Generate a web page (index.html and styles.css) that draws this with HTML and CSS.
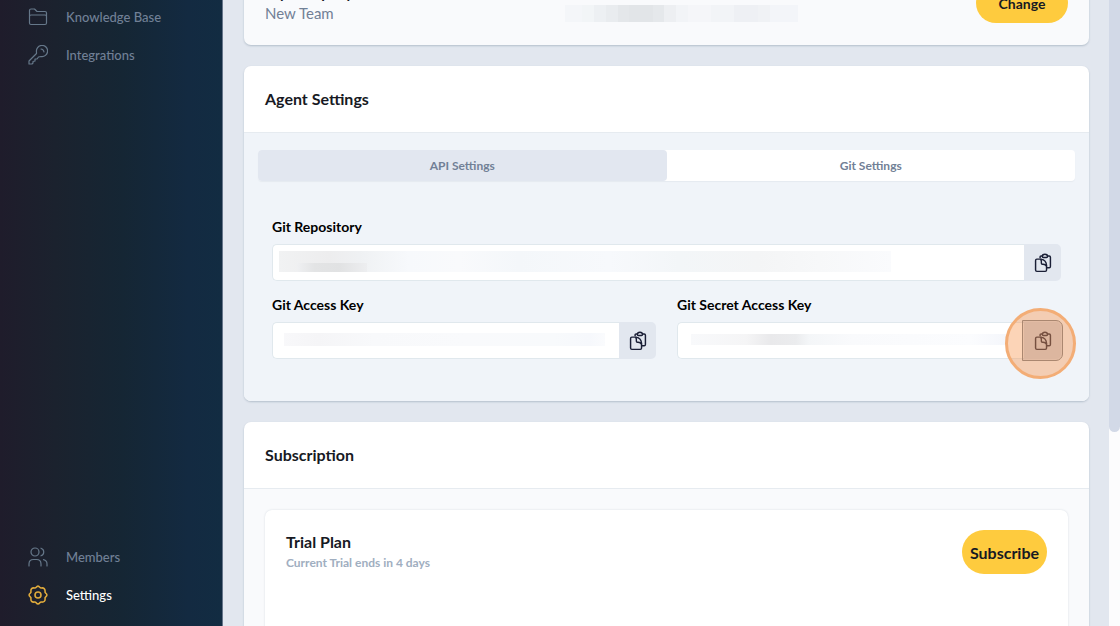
FILE: index.html
```html
<!DOCTYPE html>
<html lang="en">
<head>
<meta charset="utf-8">
<title>Settings</title>
<link rel="stylesheet" href="styles.css">
</head>
<body>
<svg class="sprite" aria-hidden="true">
  <symbol id="copy" viewBox="221 66 54 62">
    <path d="M239 82V78q0-3 3-3h4M262 75h5q4 0 4 4V108q0 4-4 4H260"/>
    <path d="M246 77q0-7 8-7t8 7q0 3-3 3H249q-3 0-3-3z"/>
    <path d="M242 85H229q-4 0-4 4V119q0 4 4 4H255q4 0 4-4V104Q258 88 242 85z"/>
    <path d="M240 85Q244 88 243 98q0 3 3 3 10-1 13 6"/>
  </symbol>
</svg>
<div class="app">
  <aside class="sidebar">
    <nav class="nav">
      <a class="nav-item" href="#"><svg class="nav-icon" viewBox="0 0 20 20"><path d="M1.5 16V3.5q0-1.500 1.500-1.500H6.500l2.500 2.500H17q1.500 0 1.500 1.500V16q0 1.500-1.500 1.500H3q-1.500 0-1.500-1.500zM1.500 9.500q0-1.500 1.500-1.500H17q1.500 0 1.500 1.500"/></svg>Knowledge Base</a>
      <a class="nav-item" href="#"><svg class="nav-icon" viewBox="0 0 20 20"><path d="M8.500 7A5.600 5.600 0 1 1 13 11.500L10.500 12 9 14H7v2L5 16.500V18L4 19H1V16L8.500 8.500zM13 4q2.500 0 3 3"/></svg>Integrations</a>
    </nav>
    <nav class="nav">
      <a class="nav-item" href="#"><svg class="nav-icon" viewBox="0 0 20 20"><circle cx="7" cy="5" r="4"/><path d="M1 19V17q0-4.500 4.500-4.500h3Q13 12.500 13 17v2M13 1.200a4 4 0 0 1 0 7.600M15.500 12.700Q19 13.500 19 17v2"/></svg>Members</a>
      <a class="nav-item active" href="#"><svg class="nav-icon" viewBox="0 0 20 20"><circle cx="10" cy="10" r="3"/><path d="M8.200 2.300Q10-.100 11.800 2.300Q12.600 3.300 13.900 2.900Q16.900 2.700 17.100 6.100Q16.700 7.400 17.700 8.200Q20.100 10 17.700 11.800Q16.700 12.600 17.100 13.900Q17.300 16.900 13.900 17.100Q12.600 16.700 11.800 17.700Q10 20.100 8.200 17.700Q7.400 16.700 6.100 17.100Q2.700 17.300 2.900 13.900Q3.300 12.600 2.300 11.800Q-.100 10 2.300 8.200Q3.300 7.400 2.900 6.100Q2.700 2.700 6.100 2.900Q7.400 3.300 8.200 2.300z"/></svg>Settings</a>
    </nav>
  </aside>
  <main class="main">
    <section class="card team">
      <div>
        <h2 class="team-title">My Company</h2>
        <p class="team-name">New Team</p>
      </div>
      <span class="mask mask-team"></span>
      <button class="btn change" type="button">Change</button>
    </section>

    <section class="card">
      <h2 class="card-head">Agent Settings</h2>
      <div class="agent">
        <div class="tabs" role="tablist">
          <button class="tab selected" type="button" role="tab">API Settings</button>
          <button class="tab" type="button" role="tab">Git Settings</button>
        </div>
        <form class="fields">
          <div class="field wide">
            <label for="repo">Git Repository</label>
            <div class="group"><input id="repo" class="mask-repo" type="text" readonly><button class="copy" type="button" aria-label="Copy"><svg><use href="#copy"/></svg></button></div>
          </div>
          <div class="field">
            <label for="access">Git Access Key</label>
            <div class="group"><input id="access" class="mask-access" type="text" readonly><button class="copy" type="button" aria-label="Copy"><svg><use href="#copy"/></svg></button></div>
          </div>
          <div class="field">
            <label for="secret">Git Secret Access Key</label>
            <div class="group"><input id="secret" class="mask-secret" type="text" readonly><button class="copy spotlight" type="button" aria-label="Copy"><svg><use href="#copy"/></svg></button></div>
          </div>
        </form>
      </div>
    </section>

    <section class="card">
      <h2 class="card-head">Subscription</h2>
      <div class="subscription">
        <div class="plan">
          <div>
            <h3 class="plan-title">Trial Plan</h3>
            <p class="plan-note">Current Trial ends in 4 days</p>
          </div>
          <button class="btn subscribe" type="button">Subscribe</button>
        </div>
      </div>
    </section>
  </main>
  <div class="scroll-track"><div class="scroll-thumb"></div></div>
</div>
</body>
</html>
```
FILE: styles.css
```css
* { box-sizing: border-box; }
body { margin: 0; font-family: Lato, "Liberation Sans", sans-serif; color: #171923; background: #e2e7ef; }
h2, h3, p { margin: 0; }
button, input { font: inherit; margin: 0; }
.sprite { position: absolute; width: 0; height: 0; }

.app { display: flex; height: 100vh; overflow: hidden; }

.sidebar {
  flex: none; width: 223px; padding-bottom: 12px;
  display: flex; flex-direction: column; justify-content: space-between;
  background: linear-gradient(90deg, #1f1c2b 0%, #1b222e 25%, #152634 55%, #132a41 85%, #122c42 100%);
  border-right: 1px solid #66758a;
}
.nav { display: flex; flex-direction: column; }
.nav:first-child { margin-top: -2px; }
.nav-item {
  display: flex; align-items: center; gap: 18px; height: 38px; padding-left: 28px;
  color: #718096; font-size: 13px; font-weight: 500; text-decoration: none;
}
.nav-icon { width: 20px; height: 20px; fill: none; stroke: #66788a; stroke-width: 1.2; stroke-linejoin: round; stroke-linecap: round; }
.active { color: #fff; }
.active .nav-icon { stroke: #dfaa3c; stroke-width: 1.6; }

.main { flex: 1; display: flex; flex-direction: column; gap: 21px; margin-top: -37px; padding: 0 20px 0 21px; }
.card { flex: none; border-radius: 7px; background: #fff; box-shadow: 0 1px 2px rgba(45, 75, 100, .25); }
.card-head { padding: 21px; font-size: 16px; line-height: 24px; font-weight: 700; border-bottom: 1px solid #e6ebf0; }

.team { display: grid; grid-template-columns: 300px 1fr auto; align-items: center; padding: 20px 21px 22px; background: #f9fafc; }
.team-title { font-size: 15px; line-height: 18px; margin-bottom: 2px; }
.team-name { color: #718096; font-size: 15px; line-height: 20px; }
.mask-team {
  width: 233px; height: 17px; margin-top: 20px;
  background: linear-gradient(90deg, #f4f6f9 0 17px, #f2f5f7 17px 29px, #edf0f3 29px 41px, #e9ecef 41px 53px, #e4e7ea 53px 64px, #e2e5e8 64px 88px, #e5e8eb 88px 99px, #edeff2 99px 111px, #f2f4f7 111px 123px, #f5f6f9 123px 146px, #f2f4f7 146px 169px, #eef0f4 169px 193px, #f0f2f5 193px 205px, #f3f5f9 205px);
}
.btn { border: 0; padding: 0; background: #fecb3e; color: #171923; font-weight: 700; border-radius: 22px; }
.change { width: 92px; height: 40px; font-size: 14px; }

.agent { padding: 17px 14px 42px; background: #f0f4f9; border-radius: 0 0 7px 7px; }
.tabs { display: grid; grid-template-columns: 1fr 1fr; border-radius: 4px; background: #fff; box-shadow: 0 1px 1px #e5eaf0; }
.tab { height: 31px; padding: 0; border: 0; border-radius: 4px; background: none; color: #718096; font-size: 12px; font-weight: 700; }
.tab.selected { background: #e2e7f0; }
.fields { display: grid; grid-template-columns: 1fr 1fr; gap: 14px 21px; padding: 36px 14px 0; }
.wide { grid-column: 1 / -1; }
.field label { display: block; margin-bottom: 7px; color: #000; font-size: 14px; line-height: 20px; font-weight: 700; }
.group { display: flex; height: 37px; }
.group input {
  flex: 1; min-width: 0; padding: 0 12px; border: 1px solid #e0e8ed; border-right: 0; border-radius: 5px 0 0 5px;
  background-color: #fff; background-repeat: no-repeat;
}
.copy {
  flex: none; width: 37px; padding: 0; display: grid; place-items: center;
  border: 0; border-radius: 0 5px 5px 0; background: #e2e7ef;
}
.copy svg { width: 18px; height: 20px; fill: none; stroke: #1a1f36; stroke-width: 4.5; stroke-linejoin: round; }
.mask-repo {
  background-image:
    linear-gradient(90deg, #eff0f2, #e3e4e5 25%, #e1e2e3 60%, #edeef0),
    linear-gradient(90deg, #f1f2f3, #ededee 50px, #eff1f3 80px, #f7f9fc 130px, #f9fafc 180px, #f4f7fa 240px, #f7f9fc 330px, #f3f6f8 400px, #f4f5f6 480px, #f7f8f9 540px, #fafbfd 612px);
  background-size: 70px 9px, 612px 21px;
  background-position: 24px 18px, 6px 6px;
}
.mask-access {
  background-image: linear-gradient(90deg, #f8f8fa, #f5f5f7 34px, #f8f9fb 90px, #f9fafc 180px, #f8fafc 270px, #f6f8fc 305px, #fafbfd);
  background-size: 321px 13px; background-position: 11px 10px;
}
.mask-secret {
  background-image: linear-gradient(90deg, #f8f9fb, #f5f5f6 55px, #e9e9eb 80px, #ebecee 105px, #f4f6f8 118px, #f9fafc 160px, #fbfcfe 280px, #f4f6fb);
  background-size: 316px 11px; background-position: 13px 11px;
}
.spotlight { position: relative; }
.spotlight::before {
  content: ""; position: absolute; inset: -2px; border: 1px solid #777f89;
  border-radius: 0 7px 7px 0; background: rgba(70, 60, 80, .15);
}
.spotlight::after {
  content: ""; position: absolute; top: 50%; left: 50%; width: 65px; height: 65px; margin: -33px 0 0 -38px;
  border: 3px solid #f3ad76; border-radius: 50%; background: rgba(247, 148, 75, .4);
}

.subscription { padding: 21px; background: #f9fafc; }
.plan {
  display: flex; align-items: flex-start; justify-content: space-between; min-height: 160px; padding: 20px 21px;
  border-radius: 7px; background: #fff; box-shadow: 0 0 2px rgba(45, 75, 100, .18);
}
.plan-title { font-size: 16px; line-height: 24px; }
.plan-note { color: #a0aec0; font-size: 12px; line-height: 18px; font-weight: 700; }
.subscribe { width: 85px; height: 44px; font-size: 16px; }

.scroll-track { flex: none; width: 11px; background: #fcfcfd; }
.scroll-thumb { height: 69%; border-radius: 0 0 6px 6px; background: #d2d9e7; }
```
